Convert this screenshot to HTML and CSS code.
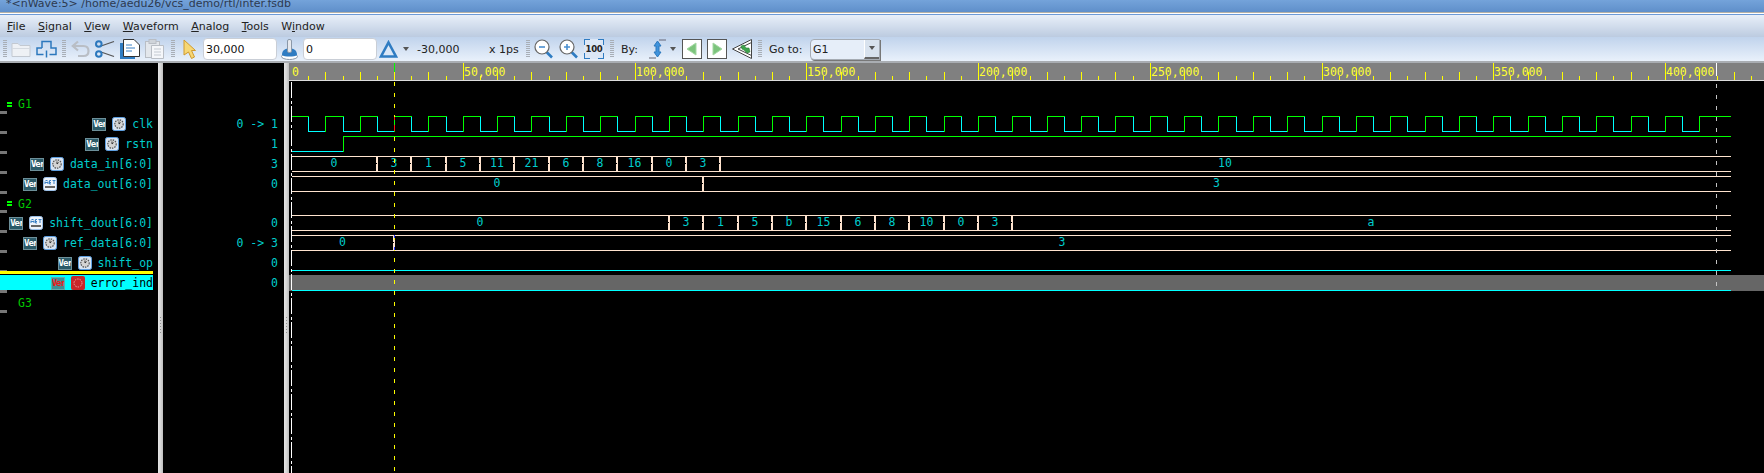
FILE: index.html
```html
<!DOCTYPE html>
<html lang="en">
<head>
<meta charset="utf-8">
<title>nWave</title>
<link rel="stylesheet" href="styles.css">
</head>
<body>
<svg class="defs" width="0" height="0" aria-hidden="true">
  <symbol id="clock" viewBox="0 0 14 14">
    <rect x=".5" y=".5" width="13" height="13" rx="2" fill="#d8e4f2" stroke="#5d9ee0"/>
    <circle cx="7" cy="7" r="4.200" fill="#d4d4d4" stroke="#555" stroke-width="1.200" stroke-dasharray="1.500 1"/>
    <path d="M7 4.500V7L8.600 5.600" fill="none" stroke="#333" stroke-width="1"/>
  </symbol>
  <symbol id="abc" viewBox="0 0 14 14">
    <rect x=".5" y=".5" width="13" height="13" rx="2" fill="#eef3fa" stroke="#9cc0e8"/>
    <path d="M2.500 3.500h2M2 4.500v2.500M5 4.500v2.500M2 5.500h3M6.500 3.500v3.500M8 3.500H6.500M8 5.500H6.500M8 7H6.500M9.500 3.500h3M11 3.500v3.500" fill="none" stroke="#3b80c4"/>
    <rect x="2" y="9" width="10" height="2" fill="#666"/>
  </symbol>
  <symbol id="grip" viewBox="0 0 4 18">
    <path d="M0 .5h4M0 2.500h4M0 4.500h4M0 6.500h4M0 8.500h4M0 10.500h4M0 12.500h4M0 14.500h4M0 16.500h4" stroke="#a8aeb6" fill="none"/>
  </symbol>
  <symbol id="drop" viewBox="0 0 6 4">
    <path d="M0 0H6L3 4Z" fill="#555"/>
  </symbol>
</svg>

<header class="titlebar"><span class="title">*&lt;nWave:5&gt; /home/aedu26/vcs_demo/rtl/inter.fsdb</span></header>
<div class="titlerule"></div>

<nav class="menubar">
  <span class="menu"><u>F</u>ile</span>
  <span class="menu"><u>S</u>ignal</span>
  <span class="menu"><u>V</u>iew</span>
  <span class="menu"><u>W</u>aveform</span>
  <span class="menu"><u>A</u>nalog</span>
  <span class="menu"><u>T</u>ools</span>
  <span class="menu">W<u>i</u>ndow</span>
</nav>

<div class="toolbar">
  <svg class="grip ml3"><use href="#grip"/></svg>
  <svg class="ml4" width="20" height="18" viewBox="0 0 20 18"><path d="M1 3.500H7L9 5.500H19V16.500H1Z" fill="#eef1f5" stroke="#c3c9d1"/><path d="M1 8.500H19" stroke="#d5dae0"/></svg>
  <svg class="ml5" width="21" height="18" viewBox="0 0 21 18" fill="none" stroke="#2c78bd" stroke-width="1.500"><path d="M6 8V1.500H15V8H20V14.500H13.500M7.500 14.500H1V8H6"/><path d="M10.500 10.500V17.500"/></svg>
  <svg class="grip ml5"><use href="#grip"/></svg>
  <svg class="ml5" width="19" height="18" viewBox="0 0 19 18" fill="none" stroke="#b9bec5" stroke-width="2.200"><path d="M7 1.500L1.800 6L7 10.500"/><path d="M2 6H12.500C15.500 6 17.500 8 17.500 11S15.500 16 12.500 16H7"/></svg>
  <svg class="ml5" width="20" height="18" viewBox="0 0 20 18" fill="none"><path d="M6 6L19 1.500M6 12L19 16.500" stroke="#555" stroke-width="1.300"/><circle cx="3.800" cy="4" r="2.800" stroke="#2c78bd" stroke-width="2"/><circle cx="3.800" cy="14" r="2.800" stroke="#2c78bd" stroke-width="2"/></svg>
  <svg class="ml5" width="20" height="20" viewBox="0 0 20 20"><rect y="4" width="15" height="16" fill="#2f7cc2"/><path d="M3.500 .5H14L19.500 6V17.500H3.500Z" fill="#fff" stroke="#333"/><path d="M6 6H12M6 9H15M6 12H12" stroke="#3b80c4"/></svg>
  <svg class="ml5" width="19" height="20" viewBox="0 0 19 20"><rect x=".5" y="2.500" width="14" height="16" fill="#e3e7ec" stroke="#b9bec5"/><rect x="4" y="0.500" width="7" height="4" fill="#cfd4da" stroke="#b9bec5"/><path d="M6.500 6.500H18.500V19.500H6.500Z" fill="#f5f7fa" stroke="#b9bec5"/><path d="M9 10H16M9 13H16M9 16H16" stroke="#c3c9d1"/></svg>
  <svg class="grip ml7"><use href="#grip"/></svg>
  <svg class="ml8" width="13" height="20" viewBox="0 0 13 20"><path d="M1 1L12.500 11.500H8.500L11.500 18L8.500 19.500L5.500 13L1 16Z" fill="#f7d774" stroke="#cf9a2e"/></svg>
  <div class="field ml7">30,000</div>
  <svg class="ml4" width="17" height="21" viewBox="0 0 17 21"><ellipse cx="8.500" cy="17.500" rx="8" ry="3" fill="#fff" stroke="#8b98a8"/><path d="M1 16C1 11 4 9.500 8.500 9.500S16 11 16 16C14 18 3 18 1 16Z" fill="#2f7cc2"/><rect x="6.500" y="0.500" width="4" height="13" rx="1.500" fill="#e6e9ee" stroke="#8b98a8"/></svg>
  <div class="field ml5">0</div>
  <svg class="ml2" width="19" height="18" viewBox="0 0 19 18"><path d="M9.500 2.500L17 16.500H2Z" fill="#dbe8f8" stroke="#2f7cc2" stroke-width="2.600"/></svg>
  <svg class="drop ml5"><use href="#drop"/></svg>
  <span class="tlabel w43 ml8">-30,000</span>
  <span class="tlabel w29 ml29">x 1ps</span>
  <svg class="grip ml8"><use href="#grip"/></svg>
  <svg class="ml4" width="19" height="20" viewBox="0 0 19 20"><path d="M12 12.500L18 18.500" stroke="#2f7cc2" stroke-width="2.600"/><circle cx="8" cy="8" r="7" fill="#fff" stroke="#666" stroke-width="1.200"/><path d="M5 8H11" stroke="#4a8fd0" stroke-width="1.600"/></svg>
  <svg class="ml6" width="19" height="20" viewBox="0 0 19 20"><path d="M12 12.500L18 18.500" stroke="#2f7cc2" stroke-width="2.600"/><circle cx="8" cy="8" r="7" fill="#fff" stroke="#666" stroke-width="1.200"/><path d="M5 8H11M8 5V11" stroke="#4a8fd0" stroke-width="1.600"/></svg>
  <div class="hundred ml6"><span>100</span></div>
  <svg class="grip ml6"><use href="#grip"/></svg>
  <span class="tlabel w16 ml7">By:</span>
  <svg class="ml12" width="17" height="20" viewBox="0 0 17 20"><path d="M10 1H17M0 19H7" stroke="#667" stroke-width="1.200"/><path d="M8.500 2L12 7H10V13H12L8.500 18L5 13H7V7H5Z" fill="#3f93dc" stroke="#2c78bd"/></svg>
  <svg class="drop ml4"><use href="#drop"/></svg>
  <svg class="ml6" width="20" height="20" viewBox="0 0 20 20"><rect x=".5" y=".5" width="19" height="19" fill="#fff" stroke="#555"/><path d="M14 4V16L5 10Z" fill="#7cc47c" stroke="#a4d8a4"/></svg>
  <svg class="ml5" width="20" height="20" viewBox="0 0 20 20"><rect x=".5" y=".5" width="19" height="19" fill="#fff" stroke="#555"/><path d="M6 4V16L15 10Z" fill="#7cc47c" stroke="#a4d8a4"/></svg>
  <svg class="ml5" width="20" height="20" viewBox="0 0 20 20" fill="none"><path d="M19.500 .5V19.500L.5 10Z" fill="#fff" stroke="#444"/><path d="M19.500 3.500L6 10L19.500 16.500" stroke="#444"/><path d="M9 7L12 6L14 9L17 9L18 13L15 14L12 11L10 10Z" fill="#3fa34d" stroke="#2d7f3a" stroke-width=".6"/></svg>
  <svg class="grip ml6"><use href="#grip"/></svg>
  <span class="tlabel w33 ml7">Go to:</span>
  <div class="combo ml8"><span class="combo-text">G1</span><span class="combo-btn"><svg class="drop"><use href="#drop"/></svg></span></div>
</div>

<main class="panes">
  <section class="pane names">
    <div class="row group"><i class="eq"></i><span class="gname">G1</span></div>
    <div class="row"><span class="ver">Ver</span><svg class="ico"><use href="#clock"/></svg><span class="sig">clk</span></div>
    <div class="row"><span class="ver">Ver</span><svg class="ico"><use href="#clock"/></svg><span class="sig">rstn</span></div>
    <div class="row"><span class="ver">Ver</span><svg class="ico"><use href="#clock"/></svg><span class="sig">data_in[6:0]</span></div>
    <div class="row"><span class="ver">Ver</span><svg class="ico"><use href="#abc"/></svg><span class="sig">data_out[6:0]</span></div>
    <div class="row group short"><i class="eq"></i><span class="gname">G2</span></div>
    <div class="row"><span class="ver">Ver</span><svg class="ico"><use href="#abc"/></svg><span class="sig">shift_dout[6:0]</span></div>
    <div class="row"><span class="ver">Ver</span><svg class="ico"><use href="#clock"/></svg><span class="sig">ref_data[6:0]</span></div>
    <div class="row"><span class="ver">Ver</span><svg class="ico"><use href="#clock"/></svg><span class="sig">shift_op</span></div>
    <div class="row sel"><span class="ver">Ver</span><svg class="ico red" viewBox="0 0 14 14"><rect width="14" height="14" rx="2" fill="#c8262a"/><circle cx="7" cy="7" r="4" fill="none" stroke="#f0a0a0" stroke-dasharray="1.500 1"/></svg><span class="sig">error_ind</span></div>
    <div class="row group"><i class="eq none"></i><span class="gname">G3</span></div>
  </section>
  <div class="sash"><i></i></div>
  <section class="pane values">
    <div class="vrow"></div>
    <div class="vrow">0 -&gt; 1</div>
    <div class="vrow">1</div>
    <div class="vrow">3</div>
    <div class="vrow">0</div>
    <div class="vrow short"></div>
    <div class="vrow">0</div>
    <div class="vrow">0 -&gt; 3</div>
    <div class="vrow">0</div>
    <div class="vrow">0</div>
  </section>
  <div class="sash"><i></i></div>
  <svg id="wave" class="wave" viewBox="289 63 1475 410" width="1475" height="410"></svg>
</main>
<script src="waves.js"></script>
</body>
</html>
```

FILE: styles.css
```css
* { box-sizing: border-box; }
html, body { margin: 0; padding: 0; height: 473px; overflow: hidden; background: #000; }
body { font-family: "DejaVu Sans", sans-serif; font-size: 11px; color: #222; display: flex; flex-direction: column; width: 1764px; }
.defs { position: absolute; }
svg { display: block; flex: none; }

.titlebar { height: 13px; background: linear-gradient(#74a3da, #5f8fca); border-bottom: 1px solid #b5b1a6; overflow: hidden; padding-left: 6px; }
.title { display: block; margin-top: -3px; line-height: 13px; color: #2d3a50; white-space: nowrap; }
.titlerule { height: 2px; background: #fff; border-bottom: 1px solid #6c9ad6; }

.menubar { height: 22px; display: flex; align-items: center; padding-left: 1px; background: linear-gradient(#e8eff9, #bccbe0); }
.menu { padding: 0 6px; white-space: nowrap; color: #222; margin-right: .5px; }

.toolbar { height: 26px; display: flex; align-items: center; background: linear-gradient(#c0d3ec, #e9f1fb); border-bottom: 2px solid #a9adb2; }
.grip { width: 4px; height: 18px; }
.drop { width: 6px; height: 4px; }
.ml2 { margin-left: 2px; } .ml3 { margin-left: 3px; } .ml4 { margin-left: 4px; } .ml5 { margin-left: 5px; }
.ml6 { margin-left: 6px; } .ml7 { margin-left: 7px; } .ml8 { margin-left: 8px; } .ml12 { margin-left: 12px; } .ml29 { margin-left: 29px; }
.w16 { width: 16px; } .w29 { width: 29px; } .w33 { width: 33px; } .w43 { width: 43px; }
.tlabel { white-space: nowrap; color: #222; }
.field { width: 74px; height: 22px; line-height: 21px; padding-left: 2px; background: #fff; border: 1px solid #c9ced6; border-radius: 4px; color: #111; }
.hundred { width: 20px; height: 20px; line-height: 18px; text-align: center; font-size: 8.500px; font-weight: bold; color: #222; border: 1px solid #2f7cc2; letter-spacing: -.3px; position: relative; background: #dce7f6; }
.hundred::before { content: ""; position: absolute; left: 5px; right: 5px; top: -1px; bottom: -1px; background: #dce7f6; }
.hundred::after { content: ""; position: absolute; left: -1px; right: -1px; top: 5px; bottom: 5px; background: #dce7f6; }
.hundred span { position: relative; z-index: 1; }
.combo { width: 70px; height: 21px; display: flex; align-items: stretch; background: #e6eef9; border: 1px solid #a6acb4; border-radius: 4px 0 0 4px; box-shadow: 1px 1px 0 #777; }
.combo-text { flex: 1; padding-left: 2px; line-height: 19px; color: #222; }
.combo-btn { width: 15px; display: flex; align-items: center; justify-content: center; background: #d8e2ee; border-left: 1px solid #fff; border-bottom: 2px solid #666; }

.panes { height: 410px; display: flex; background: #000; overflow: hidden; }
.pane { background: #000; font-family: "DejaVu Sans Mono", monospace; font-size: 11.500px; color: #00cdcd; flex: none; }
.names { width: 158px; padding-top: 30px; }
.values { width: 121px; padding-top: 31px; }
.sash { width: 5px; flex: none; background: linear-gradient(90deg, #e6e6e6, #d6d6d6 50%, #bdbdbd); position: relative; }
.sash i { position: absolute; left: 2px; top: 254px; width: 1px; height: 16px; background: repeating-linear-gradient(#8f8f8f 0 1px, transparent 1px 3px); }

.row { width: 153px; height: 20px; display: flex; align-items: center; justify-content: flex-end; gap: 6px; padding: 2px 0 0 0; position: relative; white-space: pre; }
.row::after { content: ""; position: absolute; left: 0; bottom: -1px; width: 7px; height: 3px; background: #777; }
.row.short { height: 19px; }
.group { justify-content: flex-start; padding-left: 7px; color: #00c800; gap: 6px; }
.eq { width: 5px; height: 5px; border-top: 2px solid #0f0; border-bottom: 2px solid #0f0; }
.eq.none { border: 0; }
.gname { color: #00c800; }
.ver { width: 14px; height: 13px; background: #2b5a68; border: 1px solid #6d8f99; color: #fff; font: bold 9px/11px "DejaVu Sans Mono", monospace; letter-spacing: -1px; text-align: center; overflow: hidden; }
.ico { width: 14px; height: 14px; }
.sel { background: linear-gradient(#000 3px, #0ff 3px, #0ff 18px, #000 18px); color: #000; }
.sel::before { content: ""; position: absolute; left: 0; top: -1px; width: 100%; height: 3px; background: #ff0; z-index: 1; }
.sel .sig { color: #000; }
.sel .ver { background: #3f8f94; border-color: #6aa; color: #f01818; }

.vrow { height: 20px; line-height: 20px; text-align: right; padding-right: 6px; white-space: pre; }
.vrow.short { height: 19px; }

.wave { width: 1475px; height: 410px; }
.wave text { font-family: "DejaVu Sans Mono", monospace; font-size: 11.500px; }
.wave path, .wave rect { shape-rendering: crispEdges; }
.t-val { fill: #00cdcd; text-anchor: middle; }
.t-rul { fill: #ffff33; }
```

FILE: waves.js
```js
(function () {
  var X = function (t) { return Math.round(291 + t * 0.003435); };
  var END = 1730, GREEN = "#00ff00", CYAN = "#00ffff", PEACH = "#ffe4cf", YEL = "#ffff00";
  var out = [];
  function line(d, c, extra) { out.push('<path d="' + d + '" fill="none" stroke="' + c + '"' + (extra || "") + "/>"); }
  function rect(x, y, w, h, c) { out.push('<rect x="' + x + '" y="' + y + '" width="' + w + '" height="' + h + '" fill="' + c + '"/>'); }
  function h(x1, x2, y) { return "M" + x1 + " " + (y + 0.5) + "H" + (x2 + 1); }
  function v(x, y1, y2) { return "M" + (x + 0.5) + " " + y1 + "V" + (y2 + 1); }

  // selected row and ruler
  rect(289, 275, 1475, 16, "#666666");
  rect(289, 63, 1475, 17, "#808080");
  rect(289, 80, 1475, 1, "#dddddd");
  for (var t = 5000; t <= 425000; t += 5000) {
    var major = t % 50000 === 0, even = t % 10000 === 0;
    var top = major ? 63 : even ? 72 : 76;
    rect(X(t), top, 1, 80 - top, YEL);
  }
  for (var m = 0; m <= 400000; m += 50000) {
    var label = m === 0 ? "0" : String(m).replace(/(\d)(?=(\d{3})$)/, "$1,");
    out.push('<text class="t-rul" x="' + (X(m) + 1) + '" y="76">' + label + "</text>");
  }

  // clk
  var g = "", c = "";
  for (var k = 0; k <= 41; k++) {
    var r = X(k * 10000), f = X(k * 10000 + 5000), nx = X((k + 1) * 10000);
    if (k === 41) { g += h(r, END, 116) + v(r, 116, 131); break; }
    g += h(k ? r : 292, f, 116);
    if (k) g += v(r, 116, 131);
    c += v(f, 116, 131) + h(f, nx, 131);
  }
  line(c, CYAN); line(g, GREEN);

  // rstn
  line(h(292, 343, 151), CYAN);
  line(v(343, 136, 151) + h(343, END, 136), GREEN);

  // buses
  function bus(top, bottom, starts, values) {
    line(h(292, END, top) + h(292, END, bottom), PEACH);
    var xs = [291].concat(starts.map(X), [END]);
    for (var i = 0; i < values.length; i++) {
      if (i > 0) {
        rect(xs[i] - 1, top, 2, bottom - top + 1, PEACH);
        rect(xs[i] - 1, top + 7, 1, 1, "#000");
      }
      out.push('<text class="t-val" x="' + ((xs[i] + xs[i + 1]) / 2) + '" y="' + (top + 11) + '">' + values[i] + "</text>");
    }
  }
  function seq(a, n) { var s = []; for (var i = 0; i < n; i++) s.push(a + i * 10000); return s; }
  bus(156, 171, seq(25000, 11), ["0", "3", "1", "5", "11", "21", "6", "8", "16", "0", "3", "10"]);
  bus(176, 191, [120000], ["0", "3"]);
  bus(215, 230, seq(110000, 11), ["0", "3", "1", "5", "b", "15", "6", "8", "10", "0", "3", "a"]);
  bus(235, 250, [30000], ["0", "3"]);

  // single-bit lows
  line(h(292, END, 270), CYAN);
  line(h(292, END, 290), CYAN);

  // markers: time-zero line, cursor, second marker
  var dash = function (p) { return ' stroke-dasharray="' + p + '"'; };
  line(v(291, 82, 472), "#ffffff", dash("16 3 3 2"));
  line(v(394, 82, 472), YEL, dash("4 7"));
  line(v(1716, 84, 292), "#c4c4c4", dash("4 7"));
  rect(394, 63, 1, 9, GREEN);
  rect(1716, 63, 1, 13, "#ffffff");
  rect(394, 117, 1, 3, "#ff1010");
  rect(394, 125, 1, 6, "#ff1010");
  rect(394, 235, 1, 3, "#2030ff");
  rect(394, 247, 1, 3, "#2030ff");
  document.getElementById("wave").innerHTML = out.join("");
})();
```
